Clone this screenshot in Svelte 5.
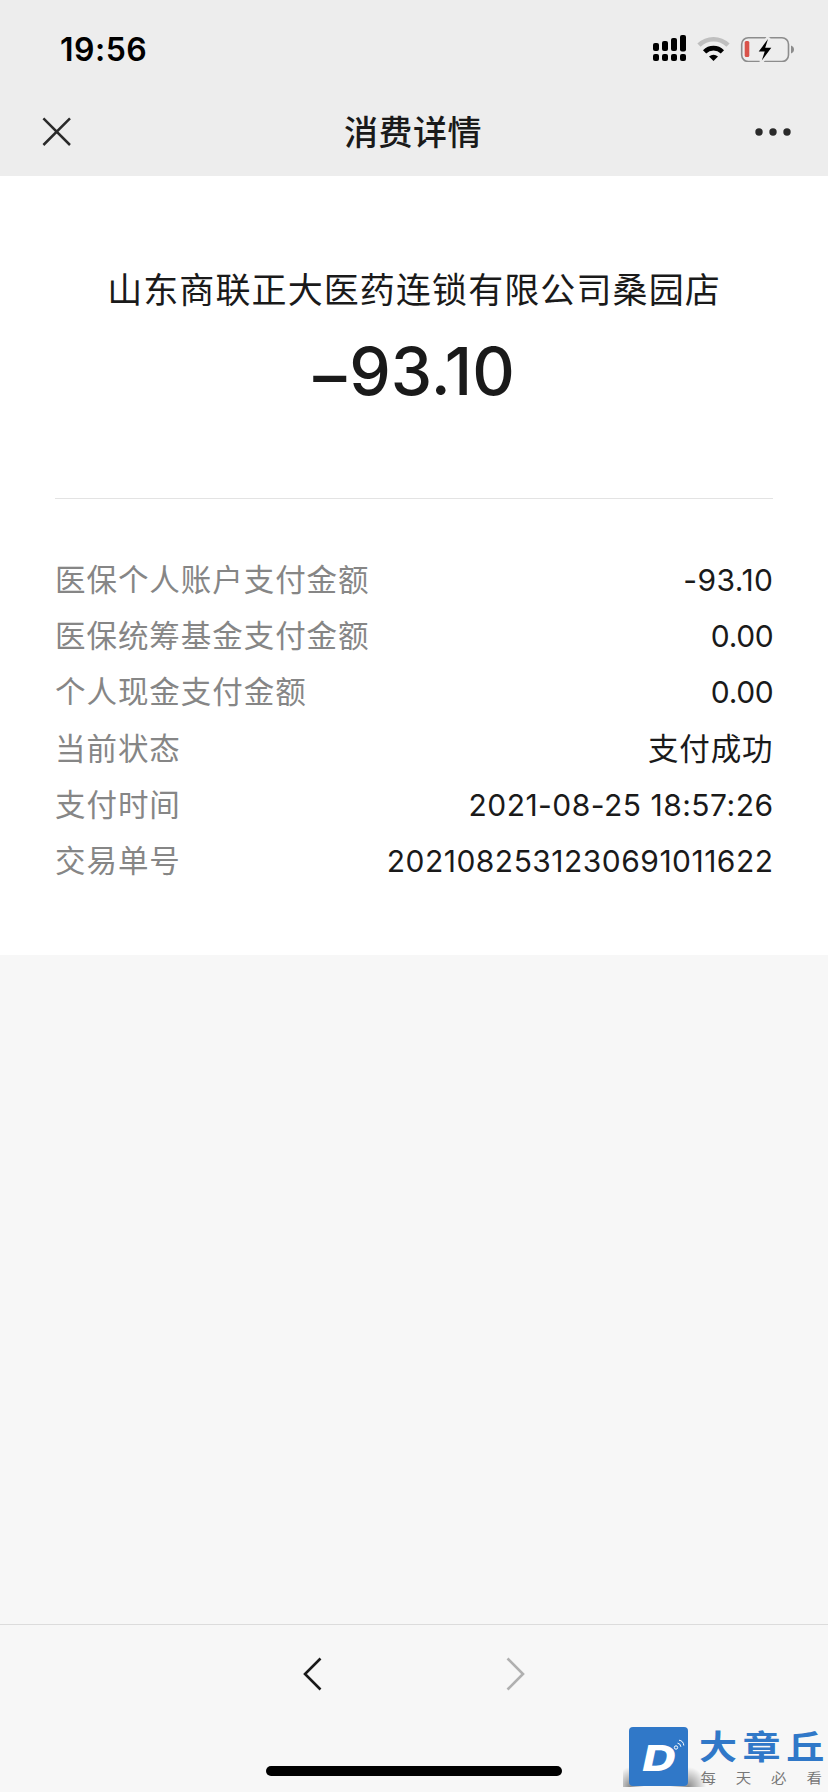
<script>
  const details = [
    { label: '医保个人账户支付金额', value: '-93.10', kind: 'amount' },
    { label: '医保统筹基金支付金额', value: '0.00', kind: 'zero' },
    { label: '个人现金支付金额', value: '0.00', kind: 'zero' },
    { label: '当前状态', value: '支付成功', kind: 'outcome' },
    { label: '支付时间', value: '2021-08-25 18:57:26', kind: 'time' },
    { label: '交易单号', value: '2021082531230691011622', kind: 'serial' }
  ];
</script>

<div class="screen">
  <header>
    <div class="status">
      <span class="clock">19:56</span>
      <svg class="indicators" width="142" height="27" viewBox="653 35 142 27" aria-hidden="true">
        <rect x="653" y="43" width="6" height="8" rx="2" />
        <rect x="662" y="41" width="6" height="10" rx="2" />
        <rect x="671" y="38" width="6" height="13" rx="2" />
        <rect x="680" y="35" width="6" height="16.500" rx="2" />
        <rect x="653" y="54" width="6" height="7" rx="2" />
        <rect x="662" y="54" width="6" height="7" rx="2" />
        <rect x="671" y="54" width="6" height="7" rx="2" />
        <rect x="680" y="54" width="6" height="7" rx="2" />
        <path d="M699 45.200a20.500 20.500 0 0 1 29 0" fill="none" stroke="#bfbfbf" stroke-width="4.600" />
        <path d="M704.600 51.800a12.700 12.700 0 0 1 17.800 0" fill="none" stroke="#000" stroke-width="4.600" />
        <path d="M709 56.500q4.500-3.600 9 0L713.500 61z" />
        <rect x="741.700" y="37.700" width="46.800" height="23.800" rx="6.500" fill="none" stroke="#8c8c8c" stroke-width="1.600" />
        <path d="M791 45.500q3 1.200 3 4t-3 4z" fill="#8c8c8c" />
        <rect x="744.700" y="41" width="4.600" height="16" rx="1.500" fill="#d9534a" />
        <path d="M768.500 37.500 758.500 51.500h5.500L761.300 62 771.500 47.800H766z" stroke="#ededed" stroke-width="4" />
        <path d="M768 39 758.700 51.500h6L761.800 60.500 771.300 47.800h-6.100z" />
      </svg>
    </div>
    <nav>
      <svg width="30" height="30" viewBox="0 0 30 30" aria-hidden="true">
        <path d="M1.400 1.400 28 28M28 1.400 1.400 28" fill="none" stroke="#2a2a2a" stroke-width="2.500" />
      </svg>
      <h1>消费详情</h1>
      <svg width="36" height="8" viewBox="0 0 36 8" fill="#2a2a2a" aria-hidden="true">
        <circle cx="4" cy="4" r="3.700" /><circle cx="18" cy="4" r="3.700" /><circle cx="32" cy="4" r="3.700" />
      </svg>
    </nav>
  </header>

  <main>
    <section class="summary">
      <p class="merchant">山东商联正大医药连锁有限公司桑园店</p>
      <p class="total"><span>–</span>93.10</p>
    </section>
    <dl>
      {#each details as item}
        <div class="row">
          <dt>{item.label}</dt>
          <dd class={item.kind}>{item.value}</dd>
        </div>
      {/each}
    </dl>
  </main>

  <footer>
    <div class="history">
      <svg width="20" height="36" viewBox="0 0 20 36" aria-hidden="true">
        <path d="M17.500 2.500 2 18 17.500 33.500" fill="none" stroke="#1a1a1a" stroke-width="2.600" />
      </svg>
      <svg width="20" height="36" viewBox="0 0 20 36" aria-hidden="true">
        <path d="M2.500 2.500 18 18 2.500 33.500" fill="none" stroke="#b0b0b0" stroke-width="2.600" />
      </svg>
    </div>
    <div class="home"></div>
  </footer>

  <aside>
    <div class="badge">
      <span>D</span>
      <svg width="12" height="12" viewBox="0 0 12 12" fill="none" stroke="#fff" aria-hidden="true">
        <circle cx="3" cy="8.500" r="1.700" />
        <path d="M4.500 4.200q3 .2 3.400 3.600M6 1.200q4.300.5 4.800 5.300" />
      </svg>
    </div>
    <div class="brand">
      <strong>大章<span>丘</span></strong>
      <small>每天必<span>看</span></small>
    </div>
  </aside>
</div>

<style>
  :global(body) { background: #f7f7f7; }
  .screen {
    position: relative;
    display: flex;
    flex-direction: column;
    width: 828px;
    height: 1792px;
    overflow: hidden;
    background: #f7f7f7;
    color: #1a1a1a;
    font-family: Inter, "Noto Sans CJK SC", sans-serif;
  }
  header { height: 176px; background: #ededed; }
  .status {
    display: flex;
    justify-content: space-between;
    height: 88px;
    padding: 0 33px 0 60px;
    box-sizing: border-box;
  }
  .clock {
    margin-top: 30px;
    color: #000;
    font-size: 32px;
    font-weight: 600;
    letter-spacing: 0.500px;
    line-height: 40px;
  }
  .indicators { margin-top: 35px; }
  nav {
    display: flex;
    align-items: center;
    justify-content: space-between;
    height: 88px;
    padding: 0 37px 0 42px;
    box-sizing: border-box;
  }
  h1 {
    margin: 2px 0 0 -1px;
    font-size: 34px;
    font-weight: 500;
    letter-spacing: 0.500px;
    line-height: 48px;
  }
  main {
    height: 779px;
    padding: 0 55px;
    box-sizing: border-box;
    background: #fff;
  }
  .summary {
    height: 323px;
    padding-top: 90px;
    box-sizing: border-box;
    border-bottom: 1px solid #e3e3e3;
    text-align: center;
  }
  p { margin: 0; white-space: nowrap; }
  .merchant { font-size: 35px; letter-spacing: 1.100px; line-height: 48px; }
  .total {
    margin-top: 17px;
    font-size: 66px;
    font-weight: 500;
    line-height: 80px;
  }
  .total span { position: relative; top: 4px; letter-spacing: 3px; }
  dl { margin: 53px 0 0; }
  .row {
    display: flex;
    justify-content: space-between;
    align-items: center;
    height: 56.200px;
    font-size: 30px;
    line-height: 56px;
  }
  dt { color: #868686; font-size: 30.500px; letter-spacing: 0.950px; }
  dd { margin: 0 -0.500px 0 0; letter-spacing: 0.480px; }
  .zero { letter-spacing: -0.300px; }
  .outcome { font-size: 30.500px; letter-spacing: 0.900px; }
  footer {
    display: flex;
    flex-direction: column;
    align-items: center;
    justify-content: space-between;
    height: 168px;
    margin-top: auto;
    padding: 31px 0 16px;
    box-sizing: border-box;
    border-top: 1px solid #dcdcdc;
  }
  .history { display: flex; gap: 182px; }
  .home { width: 296px; height: 10px; border-radius: 5px; background: #000; }
  aside {
    position: absolute;
    left: 629px;
    top: 1727px;
    display: flex;
    gap: 11px;
  }
  .badge {
    position: relative;
    display: flex;
    align-items: center;
    justify-content: center;
    width: 59px;
    height: 59px;
    border-radius: 4px;
    background: #3078c8;
  }
  .badge::before {
    content: "";
    position: absolute;
    z-index: -1;
    left: -6px;
    right: -18px;
    bottom: -1px;
    height: 20px;
    background:
      radial-gradient(ellipse 18px 20px at 65px 100%, #00000070, transparent),
      radial-gradient(ellipse 14px 20px at 7px 100%, #00000070, transparent);
  }
  aside { z-index: 1; }
  .badge span {
    color: #fff;
    font-family: Inter, sans-serif;
    font-size: 36px;
    font-style: italic;
    font-weight: 800;
    line-height: 59px;
    transform: translate(0, 2px) scaleX(1.280);
  }
  .badge svg { position: absolute; right: 3px; top: 12px; }
  .brand { display: flex; flex-direction: column; }
  .brand span { letter-spacing: 0; }
  strong {
    color: #3078c8;
    font-family: "Noto Sans CJK SC", sans-serif;
    font-size: 38px;
    font-weight: 700;
    letter-spacing: 5.600px;
    line-height: 40px;
    white-space: nowrap;
    transform: translateY(-1.500px) scaleY(0.870);
  }
  small {
    color: #777;
    font-family: "Noto Sans CJK SC", sans-serif;
    font-size: 15.500px;
    letter-spacing: 19.800px;
    line-height: 20px;
    margin-left: 1.500px;
    white-space: nowrap;
    transform: scaleY(0.850);
  }
</style>
